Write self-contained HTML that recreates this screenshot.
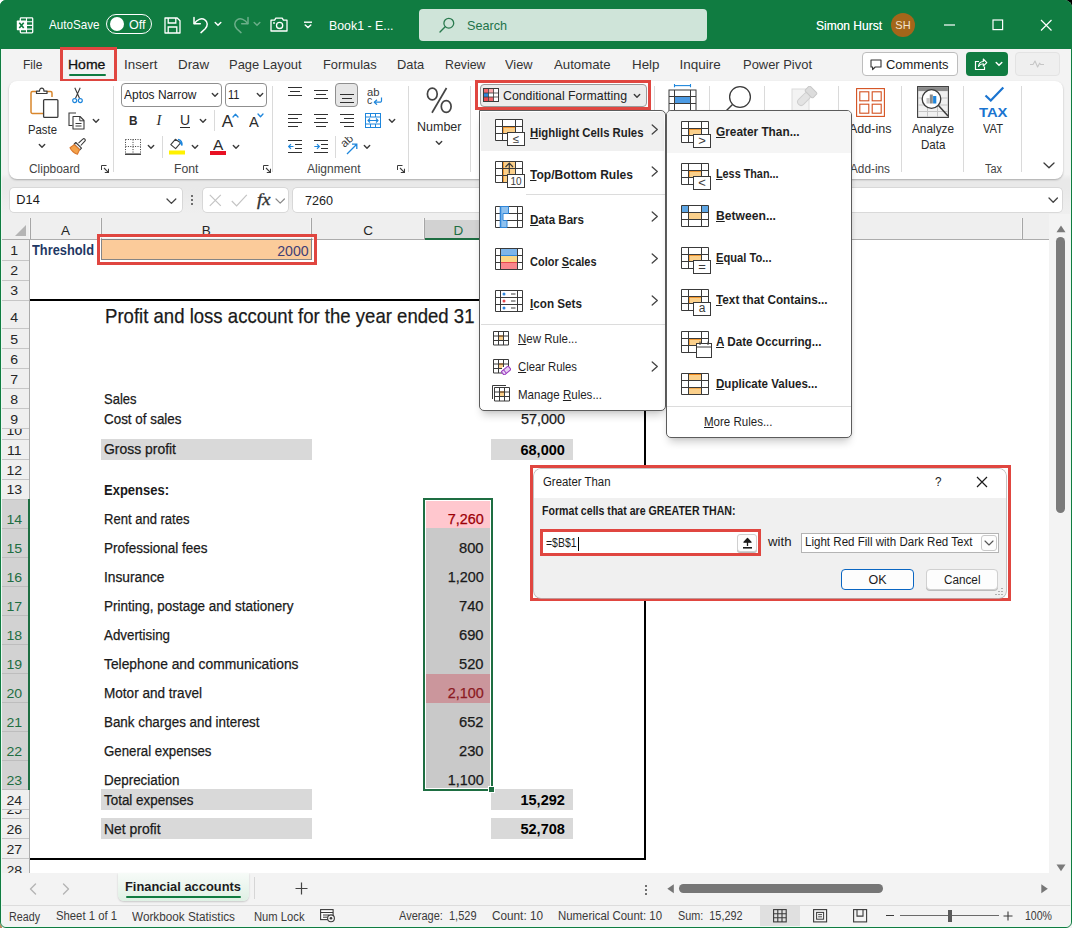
<!DOCTYPE html>
<html><head><meta charset="utf-8"><title>Excel</title>
<style>
html,body{margin:0;padding:0;}
body{width:1072px;height:928px;overflow:hidden;position:relative;background:#fff;
 font-family:"Liberation Sans",sans-serif;}
div,span.t,svg{position:absolute;box-sizing:border-box;}
span.t{white-space:nowrap;line-height:1;}
u{text-decoration-thickness:1px;text-underline-offset:1px;}
</style></head><body>
<div style="left:1060px;top:0px;width:12px;height:12px;background:#000;"></div>
<div style="left:0px;top:916px;width:12px;height:12px;background:#b88a5e;"></div>
<div style="left:1060px;top:916px;width:12px;height:12px;background:#9a9a9a;"></div>
<div style="left:0px;top:0px;width:1072px;height:928px;background:#f3f3f3;border-radius:6px 8px 6px 6px;overflow:hidden;"></div>
<div style="left:0px;top:0px;width:1072px;height:48.5px;background:#107c41;border-radius:6px 8px 0 0;"></div>
<svg style="left:16px;top:16.5px;" width="18" height="17" viewBox="0 0 18 17">
<rect x="4.300" y="0.900" width="12.400" height="15" rx="0.800" fill="none" stroke="#fff" stroke-width="1.300"/>
<path d="M4.300 4.700h12.400M4.300 8.400h12.400M4.300 12.100h12.400M10.500 0.900v15" stroke="#fff" stroke-width="1.100" fill="none"/>
<rect x="0.800" y="3.600" width="9.600" height="9.600" rx="0.600" fill="#fff"/>
<path d="M3.300 5.800l4.400 5.200M7.700 5.800l-4.400 5.200" stroke="#107c41" stroke-width="1.600" fill="none"/>
</svg>
<span id="t1" class="t" style="top:18.25px;font-size:13px;color:#fff;left:49px;transform-origin:0 0;transform:scaleX(0.8958);">AutoSave</span>
<div style="left:106px;top:14px;width:46px;height:20px;border:1.3px solid #fff;border-radius:10px;"></div>
<div style="left:109.5px;top:17px;width:14px;height:14px;background:#fff;border-radius:50%;"></div>
<span id="t2" class="t" style="top:18.25px;font-size:13px;color:#fff;left:128.5px;transform-origin:0 0;transform:scaleX(0.9644);">Off</span>
<svg style="left:164px;top:17px;" width="17" height="17" viewBox="0 0 17 17"><path d="M1 1h12.2l2.8 2.8V16H1z" fill="none" stroke="#fff" stroke-width="1.3" stroke-linejoin="round"/>
<path d="M4.2 1v5h7.6V1M4.2 16v-6h8.6v6" fill="none" stroke="#fff" stroke-width="1.3"/></svg>
<svg style="left:192px;top:15px;" width="18" height="19" viewBox="0 0 18 19"><path d="M2 2.5v6.3h6.3" fill="none" stroke="#fff" stroke-width="1.5" stroke-linecap="round" stroke-linejoin="round"/>
<path d="M2.4 8.4C5 4.6 9.3 2.6 12.6 4.6c3.6 2.3 3.2 6.3 0.6 9.1L9 17.6" fill="none" stroke="#fff" stroke-width="1.5" stroke-linecap="round"/></svg>
<svg style="left:214px;top:21px;" width="8" height="6" viewBox="0 0 8 6"><path d="M1.2 1.5l2.8 2.8 2.8-2.8" fill="none" stroke="#fff" stroke-width="1.5" stroke-linecap="round"/></svg>
<svg style="left:232px;top:15px;" width="18" height="19" viewBox="0 0 18 19"><g transform="translate(18,0) scale(-1,1)" opacity="0.38"><path d="M2 2.5v6.3h6.3" fill="none" stroke="#fff" stroke-width="1.5" stroke-linecap="round" stroke-linejoin="round"/>
<path d="M2.4 8.4C5 4.6 9.3 2.6 12.6 4.6c3.6 2.3 3.2 6.3 0.6 9.1L9 17.6" fill="none" stroke="#fff" stroke-width="1.5" stroke-linecap="round"/></g></svg>
<svg style="left:253px;top:21px;" width="8" height="6" viewBox="0 0 8 6"><path d="M1.2 1.5l2.8 2.8 2.8-2.8" fill="none" stroke="#fff" stroke-width="1.5" stroke-linecap="round" opacity="0.38"/></svg>
<svg style="left:270px;top:17px;" width="18" height="15" viewBox="0 0 18 15"><path d="M1 3.2h3.6l1.2-2h6.4l1.2 2H17V14H1z" fill="none" stroke="#fff" stroke-width="1.3" stroke-linejoin="round"/>
<circle cx="9.6" cy="8.4" r="3.1" fill="none" stroke="#fff" stroke-width="1.3"/><circle cx="4" cy="6" r="0.9" fill="#fff"/></svg>
<svg style="left:303px;top:21px;" width="10" height="8" viewBox="0 0 10 8"><path d="M1 1.2h8" stroke="#fff" stroke-width="1.4"/><path d="M2.2 4l2.8 2.6L7.8 4" fill="none" stroke="#fff" stroke-width="1.4" stroke-linecap="round"/></svg>
<span id="t3" class="t" style="top:19.25px;font-size:13px;color:#fff;left:328.5px;transform-origin:0 0;transform:scaleX(0.9496);">Book1  -  E...</span>
<div style="left:419px;top:9px;width:288px;height:32px;background:#cfe4d9;border-radius:4px;"></div>
<svg style="left:439px;top:17px;" width="16" height="16" viewBox="0 0 16 16"><circle cx="9.8" cy="6.2" r="4.9" fill="none" stroke="#2a7a4f" stroke-width="1.3"/><path d="M6.2 9.8L1 15" stroke="#2a7a4f" stroke-width="1.4" stroke-linecap="round"/></svg>
<span id="t4" class="t" style="top:19.25px;font-size:13px;color:#23734a;left:467px;transform-origin:0 0;transform:scaleX(0.9708);">Search</span>
<span id="t5" class="t" style="top:19.00px;font-size:13.5px;color:#fff;left:816px;transform-origin:0 0;transform:scaleX(0.8885);text-shadow:0 0 0.500px rgba(255,255,255,0.700);">Simon Hurst</span>
<div style="left:891px;top:13px;width:24px;height:24px;background:#a4661a;border-radius:50%;"></div>
<span id="t6" class="t" style="top:19.75px;font-size:11px;color:#f4e3cc;left:903px;transform-origin:50% 0;transform:translateX(-50%) ;">SH</span>
<svg style="left:944px;top:24px;" width="12" height="2" viewBox="0 0 12 2"><path d="M0 1h11" stroke="#fff" stroke-width="1.2"/></svg>
<svg style="left:992px;top:19px;" width="12" height="12" viewBox="0 0 12 12"><rect x="1" y="1" width="9.6" height="9.6" fill="none" stroke="#fff" stroke-width="1.2"/></svg>
<svg style="left:1040px;top:19px;" width="13" height="13" viewBox="0 0 13 13"><path d="M1 1l10.5 10.5M11.5 1L1 11.500" stroke="#fff" stroke-width="1.2"/></svg>
<span id="t7" class="t" style="top:58.00px;font-size:13.5px;color:#333;left:22.55px;transform-origin:0 0;transform:scaleX(0.8913);">File</span>
<span id="t8" class="t" style="top:58.00px;font-size:13.5px;color:#333;left:124.3px;transform-origin:0 0;transform:scaleX(0.9892);">Insert</span>
<span id="t9" class="t" style="top:58.00px;font-size:13.5px;color:#333;left:177.55px;transform-origin:0 0;transform:scaleX(0.9884);">Draw</span>
<span id="t10" class="t" style="top:58.00px;font-size:13.5px;color:#333;left:229.3px;transform-origin:0 0;transform:scaleX(0.9583);">Page Layout</span>
<span id="t11" class="t" style="top:58.00px;font-size:13.5px;color:#333;left:322.55px;transform-origin:0 0;transform:scaleX(0.9535);">Formulas</span>
<span id="t12" class="t" style="top:58.00px;font-size:13.5px;color:#333;left:396.8px;transform-origin:0 0;transform:scaleX(0.9516);">Data</span>
<span id="t13" class="t" style="top:58.00px;font-size:13.5px;color:#333;left:444.8px;transform-origin:0 0;transform:scaleX(0.9127);">Review</span>
<span id="t14" class="t" style="top:58.00px;font-size:13.5px;color:#333;left:504.8px;transform-origin:0 0;transform:scaleX(0.9473);">View</span>
<span id="t15" class="t" style="top:58.00px;font-size:13.5px;color:#333;left:553.6999999999999px;transform-origin:0 0;transform:scaleX(0.9793);">Automate</span>
<span id="t16" class="t" style="top:58.00px;font-size:13.5px;color:#333;left:631.8px;transform-origin:0 0;transform:scaleX(0.9904);">Help</span>
<span id="t17" class="t" style="top:58.00px;font-size:13.5px;color:#333;left:679.4px;transform-origin:0 0;">Inquire</span>
<span id="t18" class="t" style="top:58.00px;font-size:13.5px;color:#333;left:743.0999999999999px;transform-origin:0 0;transform:scaleX(0.9579);">Power Pivot</span>
<span id="t19" class="t" style="top:58.00px;font-size:13.5px;color:#111;left:68.2px;transform-origin:0 0;transform:scaleX(1.0384);-webkit-text-stroke:0.300px #111;">Home</span>
<div style="left:69.3px;top:73.5px;width:36.4px;height:2.6px;background:#107c41;border-radius:1.3px;"></div>
<div style="left:60px;top:47px;width:57px;height:34.5px;border:3px solid #e04640;"></div>
<div style="left:862px;top:52px;width:95.5px;height:24px;background:#fff;border:1px solid #bdbdbd;border-radius:4px;"></div>
<svg style="left:870px;top:59px;" width="12" height="12" viewBox="0 0 12 12"><path d="M1 1h10v7H5.2L2.6 10.600V8H1z" fill="none" stroke="#333" stroke-width="1.1" stroke-linejoin="round"/></svg>
<span id="t20" class="t" style="top:58.00px;font-size:13.5px;color:#222;left:886px;transform-origin:0 0;transform:scaleX(0.9576);">Comments</span>
<div style="left:966px;top:52px;width:41.5px;height:24px;background:#107c41;border-radius:4px;"></div>
<svg style="left:974px;top:57px;" width="14" height="14" viewBox="0 0 14 14"><path d="M5 4.500H1.500V12.500H10.500V9.500" fill="none" stroke="#fff" stroke-width="1.2"/><path d="M4.500 9.500C4.800 6.300 6.800 4.600 9.300 4.500V2L12.800 5.600L9.300 9V6.800C7.300 6.800 5.800 7.600 4.500 9.500z" fill="none" stroke="#fff" stroke-width="1.1" stroke-linejoin="round"/></svg>
<svg style="left:995px;top:61px;" width="8" height="6" viewBox="0 0 8 6"><path d="M1.2 1.5l2.800 2.800 2.800-2.800" fill="none" stroke="#fff" stroke-width="1.5" stroke-linecap="round"/></svg>
<div style="left:1015px;top:52px;width:45px;height:24px;background:#efefef;border:1px solid #e3e3e3;border-radius:4px;"></div>
<svg style="left:1029px;top:59px;" width="16" height="10" viewBox="0 0 16 10"><path d="M1 5.500h3l2-3.500 2.600 6 2-3.800 1 1.300h3.400" fill="none" stroke="#c6c6c6" stroke-width="1.1" stroke-linejoin="round"/></svg>
<div style="left:1.5px;top:174px;width:1069px;height:40px;background:linear-gradient(#f3f3f3 0,#e9e9e9 6px,#e9e9e9 14px,#efefef 40px);"></div>
<div style="left:8.5px;top:81px;width:1054.5px;height:98px;background:#fff;border-radius:8px;box-shadow:0 1px 2px rgba(0,0,0,0.280);"></div>
<svg style="left:30px;top:87px;" width="29" height="32" viewBox="0 0 29 32">
<path d="M6 4.500H2.500a1.500 1.500 0 0 0-1.500 1.500v19a1.500 1.500 0 0 0 1.500 1.500H13" fill="none" stroke="#d9862c" stroke-width="1.500"/>
<path d="M17 4.500h3.500a1.500 1.500 0 0 1 1.500 1.500V10" fill="none" stroke="#d9862c" stroke-width="1.500"/>
<path d="M6.500 6.500V4.200h3c0-4 4.500-4 4.500 0h3v2.300z" fill="#fff" stroke="#3b3b3b" stroke-width="1.200" stroke-linejoin="round"/>
<rect x="13.600" y="12.600" width="14.300" height="17.800" rx="1" fill="#fff" stroke="#3b3b3b" stroke-width="1.300"/></svg>
<span id="t21" class="t" style="top:123.00px;font-size:13.5px;color:#2b2b2b;left:27.6px;transform-origin:0 0;transform:scaleX(0.8398);">Paste</span>
<svg style="left:38px;top:142.5px;" width="8" height="6" viewBox="0 0 8 6"><path d="M1.300 1.600l2.700 2.700 2.700-2.700" fill="none" stroke="#3b3b3b" stroke-width="1.4" stroke-linecap="round" stroke-linejoin="round"/></svg>
<svg style="left:72px;top:87px;" width="11" height="17" viewBox="0 0 11 17"><path d="M2.800 0.800L7.600 11.500M8.200 0.800L3.400 11.500" stroke="#3b3b3b" stroke-width="1.100" fill="none"/>
<circle cx="2.700" cy="13.600" r="2" fill="none" stroke="#1e86dc" stroke-width="1.200"/><circle cx="8.300" cy="13.600" r="2" fill="none" stroke="#1e86dc" stroke-width="1.200"/></svg>
<svg style="left:68px;top:112px;" width="18" height="18" viewBox="0 0 18 18"><path d="M4.500 13.500H1V1h7l0 0" fill="none" stroke="#3b3b3b" stroke-width="1.100"/>
<path d="M5 4.500h7l4 4V17H5z" fill="#fff" stroke="#3b3b3b" stroke-width="1.100" stroke-linejoin="round"/><path d="M11.800 4.700V8.800H16" fill="none" stroke="#3b3b3b" stroke-width="1"/>
<path d="M7.500 11.500h6M7.500 14h6" stroke="#3b3b3b" stroke-width="1"/></svg>
<svg style="left:91.5px;top:118px;" width="8" height="6" viewBox="0 0 8 6"><path d="M1.300 1.600l2.700 2.700 2.700-2.700" fill="none" stroke="#3b3b3b" stroke-width="1.4" stroke-linecap="round" stroke-linejoin="round"/></svg>
<svg style="left:69px;top:138px;" width="17" height="17" viewBox="0 0 17 17"><path d="M9.500 5.200L13.800 1.200a1.400 1.400 0 0 1 2 2L11.800 7.500" fill="#fff" stroke="#3b3b3b" stroke-width="1.100"/>
<path d="M6.800 4.500l5.700 5.700-1.700 1.700-5.700-5.700z" fill="#fff" stroke="#3b3b3b" stroke-width="1.100" stroke-linejoin="round"/>
<path d="M5.300 6.600L1 9.800c1.500 3 4 5.300 7.400 6.400l2.200-4.600z" fill="#f4a24a" stroke="#d9762c" stroke-width="1.100" stroke-linejoin="round"/></svg>
<span id="t22" class="t" style="top:163.00px;font-size:12.5px;color:#444;left:28.5px;transform-origin:0 0;transform:scaleX(0.9530);">Clipboard</span>
<svg style="left:100.5px;top:165px;" width="8" height="8" viewBox="0 0 8 8"><path d="M0.500 5V0.500H5.500" fill="none" stroke="#3b3b3b" stroke-width="1"/><path d="M3 3L7.300 7.300M7.500 3.800V7.500H3.800" fill="none" stroke="#3b3b3b" stroke-width="1.100"/></svg>
<div style="left:112.5px;top:86px;width:1px;height:86px;background:#dadada;"></div>
<div style="left:121px;top:83px;width:100.5px;height:23.5px;border:1px solid #8f8f8f;border-radius:4px;background:#fff;"></div>
<span id="t23" class="t" style="top:88.00px;font-size:13.5px;color:#222;left:124.3px;transform-origin:0 0;transform:scaleX(0.8865);">Aptos Narrow</span>
<svg style="left:211px;top:92px;" width="8" height="6" viewBox="0 0 8 6"><path d="M1.300 1.600l2.700 2.700 2.700-2.700" fill="none" stroke="#3b3b3b" stroke-width="1.4" stroke-linecap="round" stroke-linejoin="round"/></svg>
<div style="left:224.5px;top:83px;width:42px;height:23.5px;border:1px solid #8f8f8f;border-radius:4px;background:#fff;"></div>
<span id="t24" class="t" style="top:88.00px;font-size:13.5px;color:#222;left:227.5px;transform-origin:0 0;transform:scaleX(0.8205);">11</span>
<svg style="left:256px;top:92px;" width="8" height="6" viewBox="0 0 8 6"><path d="M1.300 1.600l2.700 2.700 2.700-2.700" fill="none" stroke="#3b3b3b" stroke-width="1.4" stroke-linecap="round" stroke-linejoin="round"/></svg>
<span id="t25" class="t" style="top:114.00px;font-size:13.5px;color:#2b2b2b;font-weight:bold;left:129.3px;transform-origin:0 0;transform:scaleX(0.8718);">B</span>
<span id="t26" class="t" style="top:113.00px;font-size:14.5px;color:#2b2b2b;font-family:'Liberation Serif',serif;font-style:italic;left:156.5px;transform-origin:0 0;">I</span>
<span id="t27" class="t" style="top:113.25px;font-size:14px;color:#2b2b2b;left:180px;transform-origin:0 0;">U</span>
<div style="left:180px;top:127px;width:9.5px;height:1.2px;background:#2b2b2b;"></div>
<svg style="left:199px;top:118px;" width="8" height="6" viewBox="0 0 8 6"><path d="M1.300 1.600l2.700 2.700 2.700-2.700" fill="none" stroke="#3b3b3b" stroke-width="1.4" stroke-linecap="round" stroke-linejoin="round"/></svg>
<div style="left:214.1px;top:110px;width:1px;height:21px;background:#dadada;"></div>
<span id="t28" class="t" style="top:113.25px;font-size:17px;color:#2b2b2b;left:221.8px;transform-origin:0 0;">A</span>
<svg style="left:231.5px;top:113px;" width="7" height="5" viewBox="0 0 7 5"><path d="M1 4l2.500-2.800L6 4" fill="none" stroke="#1e86dc" stroke-width="1.300" stroke-linecap="round" stroke-linejoin="round"/></svg>
<span id="t29" class="t" style="top:115.00px;font-size:14.5px;color:#2b2b2b;left:249px;transform-origin:0 0;transform:scaleX(1.0132);">A</span>
<svg style="left:257px;top:113px;" width="7" height="5" viewBox="0 0 7 5"><path d="M1 1l2.500 2.800L6 1" fill="none" stroke="#1e86dc" stroke-width="1.300" stroke-linecap="round" stroke-linejoin="round"/></svg>
<svg style="left:125px;top:139px;" width="16" height="16" viewBox="0 0 16 16"><path d="M0.500 0.500h15M0.500 0.500v14M15.500 0.500v14M8 0.500v14M0.500 7.500h15" stroke="#3b3b3b" stroke-width="1" stroke-dasharray="1 1.400" fill="none"/><path d="M0 15.200h16" stroke="#3b3b3b" stroke-width="1.500"/></svg>
<svg style="left:147px;top:144px;" width="8" height="6" viewBox="0 0 8 6"><path d="M1.300 1.600l2.700 2.700 2.700-2.700" fill="none" stroke="#3b3b3b" stroke-width="1.4" stroke-linecap="round" stroke-linejoin="round"/></svg>
<div style="left:161.5px;top:136px;width:1px;height:22px;background:#dadada;"></div>
<svg style="left:168.5px;top:137px;" width="16" height="18" viewBox="0 0 16 18"><path d="M6.300 2.300L1.800 7.600l4.800 4 5-5.800z" fill="#fff" stroke="#3b3b3b" stroke-width="1.100" stroke-linejoin="round"/>
<path d="M9 2.500C11.500 3 13.300 5 13 8.500c-0.500-1.800-1.200-2.500-2.200-3" fill="none" stroke="#1e86dc" stroke-width="1.400"/>
<rect x="-0.500" y="13.500" width="17.500" height="4" fill="#fff100"/></svg>
<svg style="left:191px;top:144px;" width="8" height="6" viewBox="0 0 8 6"><path d="M1.300 1.600l2.700 2.700 2.700-2.700" fill="none" stroke="#3b3b3b" stroke-width="1.4" stroke-linecap="round" stroke-linejoin="round"/></svg>
<span id="t30" class="t" style="top:137.25px;font-size:15px;color:#2b2b2b;left:213.2px;transform-origin:0 0;transform:scaleX(1.0284);">A</span>
<div style="left:210px;top:150.5px;width:16px;height:4px;background:#e81123;"></div>
<svg style="left:232px;top:144px;" width="8" height="6" viewBox="0 0 8 6"><path d="M1.300 1.600l2.700 2.700 2.700-2.700" fill="none" stroke="#3b3b3b" stroke-width="1.4" stroke-linecap="round" stroke-linejoin="round"/></svg>
<span id="t31" class="t" style="top:163.00px;font-size:12.5px;color:#444;left:174px;transform-origin:0 0;transform:scaleX(0.9794);">Font</span>
<svg style="left:262.5px;top:165px;" width="8" height="8" viewBox="0 0 8 8"><path d="M0.500 5V0.500H5.500" fill="none" stroke="#3b3b3b" stroke-width="1"/><path d="M3 3L7.300 7.300M7.500 3.800V7.500H3.800" fill="none" stroke="#3b3b3b" stroke-width="1.100"/></svg>
<div style="left:272.1px;top:86px;width:1px;height:86px;background:#dadada;"></div>
<div style="left:288.0px;top:87px;width:14px;height:1.15px;background:#303030;"></div>
<div style="left:290.0px;top:91px;width:10px;height:1.15px;background:#303030;"></div>
<div style="left:288.0px;top:95px;width:14px;height:1.15px;background:#303030;"></div>
<div style="left:314.0px;top:90px;width:14px;height:1.15px;background:#303030;"></div>
<div style="left:316.0px;top:94px;width:10px;height:1.15px;background:#303030;"></div>
<div style="left:314.0px;top:98px;width:14px;height:1.15px;background:#303030;"></div>
<div style="left:335px;top:83px;width:23px;height:23.5px;background:#e6e6e6;border:1px solid #8f8f8f;border-radius:4px;"></div>
<div style="left:339.5px;top:94px;width:14px;height:1.15px;background:#303030;"></div>
<div style="left:341.5px;top:98px;width:10px;height:1.15px;background:#303030;"></div>
<div style="left:339.5px;top:102px;width:14px;height:1.15px;background:#303030;"></div>
<span id="t32" class="t" style="top:87.00px;font-size:10.5px;color:#3b3b3b;left:367px;transform-origin:0 0;transform:scaleX(1.0695);">ab</span>
<span id="t33" class="t" style="top:95.00px;font-size:10.5px;color:#3b3b3b;left:367px;transform-origin:0 0;">c</span>
<svg style="left:372.5px;top:97px;" width="10" height="8" viewBox="0 0 10 8"><path d="M8.500 0.500v3.200a1.500 1.500 0 0 1-1.500 1.500H1.500" fill="none" stroke="#1e86dc" stroke-width="1.200"/><path d="M4 2.700L1.300 5.200 4 7.700" fill="none" stroke="#1e86dc" stroke-width="1.200" stroke-linejoin="round"/></svg>
<div style="left:288px;top:114px;width:14px;height:1.15px;background:#303030;"></div>
<div style="left:288px;top:118px;width:10px;height:1.15px;background:#303030;"></div>
<div style="left:288px;top:122px;width:14px;height:1.15px;background:#303030;"></div>
<div style="left:288px;top:126px;width:10px;height:1.15px;background:#303030;"></div>
<div style="left:314.0px;top:114px;width:14px;height:1.15px;background:#303030;"></div>
<div style="left:316.0px;top:118px;width:10px;height:1.15px;background:#303030;"></div>
<div style="left:314.0px;top:122px;width:14px;height:1.15px;background:#303030;"></div>
<div style="left:316.0px;top:126px;width:10px;height:1.15px;background:#303030;"></div>
<div style="left:340px;top:114px;width:14px;height:1.15px;background:#303030;"></div>
<div style="left:344px;top:118px;width:10px;height:1.15px;background:#303030;"></div>
<div style="left:340px;top:122px;width:14px;height:1.15px;background:#303030;"></div>
<div style="left:344px;top:126px;width:10px;height:1.15px;background:#303030;"></div>
<svg style="left:365px;top:113px;" width="16" height="15" viewBox="0 0 16 15"><rect x="0.500" y="0.500" width="15" height="14" fill="#fff" stroke="#1e86dc" stroke-width="1"/><path d="M5.500 0.500v3.500M10.500 0.500v3.500M5.500 11v3.500M10.500 11v3.500M0.500 4h15M0.500 11h15" stroke="#1e86dc" stroke-width="1" fill="none"/>
<path d="M3 7.500h10M5 5.500L3 7.500 5 9.500M11 5.500l2 2-2 2" fill="none" stroke="#1e86dc" stroke-width="1.100"/></svg>
<svg style="left:387.5px;top:118px;" width="8" height="6" viewBox="0 0 8 6"><path d="M1.300 1.600l2.700 2.700 2.700-2.700" fill="none" stroke="#3b3b3b" stroke-width="1.4" stroke-linecap="round" stroke-linejoin="round"/></svg>
<svg style="left:288px;top:140px;" width="15" height="14" viewBox="0 0 15 14"><path d="M0 0.500h14M7 4.500h7M7 8.500h7M0 12.500h14" stroke="#303030" stroke-width="1.100"/><path d="M5.500 6.500H0.800M3 4.200L0.700 6.500 3 8.800" fill="none" stroke="#1e86dc" stroke-width="1.200"/></svg>
<svg style="left:314px;top:140px;" width="15" height="14" viewBox="0 0 15 14"><path d="M0 0.500h14M7 4.500h7M7 8.500h7M0 12.500h14" stroke="#303030" stroke-width="1.100"/><path d="M0.300 6.500H5.200M3 4.200L5.300 6.500 3 8.800" fill="none" stroke="#1e86dc" stroke-width="1.200"/></svg>
<div style="left:334.5px;top:136px;width:1px;height:22px;background:#dadada;"></div>
<svg style="left:341px;top:137px;" width="18" height="18" viewBox="0 0 18 18"><text x="0" y="0" font-family="Liberation Sans" font-size="11.500" fill="#3b3b3b" transform="translate(3.500,11) rotate(-42)">ab</text>
<path d="M6 17L15.500 7.500M11 7.200H15.800V12" fill="none" stroke="#1e86dc" stroke-width="1.300"/></svg>
<svg style="left:362.5px;top:144px;" width="8" height="6" viewBox="0 0 8 6"><path d="M1.300 1.600l2.700 2.700 2.700-2.700" fill="none" stroke="#3b3b3b" stroke-width="1.4" stroke-linecap="round" stroke-linejoin="round"/></svg>
<span id="t34" class="t" style="top:163.00px;font-size:12.5px;color:#444;left:306.5px;transform-origin:0 0;transform:scaleX(0.9623);">Alignment</span>
<svg style="left:397px;top:165px;" width="8" height="8" viewBox="0 0 8 8"><path d="M0.500 5V0.500H5.500" fill="none" stroke="#3b3b3b" stroke-width="1"/><path d="M3 3L7.300 7.300M7.500 3.800V7.500H3.800" fill="none" stroke="#3b3b3b" stroke-width="1.100"/></svg>
<div style="left:407.9px;top:86px;width:1px;height:86px;background:#dadada;"></div>
<svg style="left:426px;top:87px;" width="27" height="27" viewBox="0 0 27 27"><ellipse cx="6.300" cy="7" rx="4.900" ry="5.900" fill="none" stroke="#444" stroke-width="1.700"/><ellipse cx="20.200" cy="19.500" rx="4.900" ry="5.900" fill="none" stroke="#444" stroke-width="1.700"/><path d="M20.500 1L6 25.800" stroke="#444" stroke-width="1.700"/></svg>
<span id="t35" class="t" style="top:120.00px;font-size:13.5px;color:#2b2b2b;left:417px;transform-origin:0 0;transform:scaleX(0.9268);">Number</span>
<svg style="left:435px;top:139.5px;" width="8" height="6" viewBox="0 0 8 6"><path d="M1.300 1.600l2.700 2.700 2.700-2.700" fill="none" stroke="#3b3b3b" stroke-width="1.4" stroke-linecap="round" stroke-linejoin="round"/></svg>
<div style="left:470.0px;top:86px;width:1px;height:86px;background:#dadada;"></div>
<div style="left:479.5px;top:83.5px;width:167.5px;height:23px;background:#ececec;border:1px solid #9a9a9a;border-radius:4px;"></div>
<svg style="left:483px;top:88px;" width="16" height="14" viewBox="0 0 16 14"><rect x="0.500" y="0.500" width="15" height="13" fill="#fff" stroke="#3b3b3b" stroke-width="1"/>
<rect x="1" y="1" width="4.500" height="4" fill="#f0686d"/><rect x="5.500" y="1" width="5" height="4" fill="#f9a9ac"/><rect x="1" y="5" width="4.500" height="4" fill="#2f86d9"/><rect x="1" y="9" width="4.500" height="4" fill="#e8474c"/><rect x="5.500" y="9" width="5" height="4" fill="#f0686d"/>
<path d="M5.500 0.500v13M10.500 0.500v13M0.500 5h15M0.500 9h15" stroke="#3b3b3b" stroke-width="0.800" fill="none"/></svg>
<span id="t36" class="t" style="top:89.00px;font-size:13.5px;color:#222;left:503.2px;transform-origin:0 0;transform:scaleX(0.9129);">Conditional Formatting</span>
<svg style="left:632.5px;top:92.5px;" width="8" height="6" viewBox="0 0 8 6"><path d="M1.300 1.600l2.700 2.700 2.700-2.700" fill="none" stroke="#3b3b3b" stroke-width="1.4" stroke-linecap="round" stroke-linejoin="round"/></svg>
<div style="left:475.2px;top:80px;width:175.5px;height:30.2px;border:3.200px solid #e04640;"></div>
<div style="left:654.2px;top:86px;width:1px;height:86px;background:#dadada;"></div>
<svg style="left:668px;top:84px;" width="29" height="30" viewBox="0 0 29 30"><path d="M6.500 1.600h16" stroke="#1e86dc" stroke-width="1.100"/><path d="M6.500 0v3.200M22.500 0v3.200" stroke="#1e86dc" stroke-width="1.100"/>
<rect x="1" y="6" width="27" height="22" fill="#fff" stroke="#3b3b3b" stroke-width="1"/><path d="M6.500 6v22M22.500 6v22M1 12.500h27M1 19.500h27" stroke="#3b3b3b" stroke-width="1" fill="none"/><rect x="7" y="13" width="15" height="6" fill="#4c9be4"/></svg>
<div style="left:709.2px;top:86px;width:1px;height:86px;background:#dadada;"></div>
<svg style="left:722px;top:85px;" width="32" height="32" viewBox="0 0 32 32"><circle cx="18" cy="12" r="10.400" fill="#fff" stroke="#3b3b3b" stroke-width="1.300"/><path d="M10.500 19.500L2 28" stroke="#3b3b3b" stroke-width="1.500"/></svg>
<div style="left:764.0px;top:86px;width:1px;height:86px;background:#dadada;"></div>
<svg style="left:790px;top:86px;" width="30" height="28" viewBox="0 0 30 28"><rect x="2" y="3" width="17" height="24" fill="#f3f3f3" stroke="#dcdcdc" stroke-width="1"/>
<g transform="rotate(-45 15 12)"><rect x="6" y="8.500" width="15" height="7" rx="3.500" fill="#e3e3e3" stroke="#cfcfcf"/><rect x="20" y="6.500" width="7" height="11" rx="1.500" fill="#dcdcdc" stroke="#c8c8c8"/></g></svg>
<div style="left:837.5px;top:86px;width:1px;height:86px;background:#dadada;"></div>
<svg style="left:856px;top:87.5px;" width="29" height="29" viewBox="0 0 29 29"><rect x="0.600" y="0.600" width="27.800" height="27.800" fill="#fff" stroke="#d4501f" stroke-width="1.100"/>
<rect x="3.800" y="3.800" width="9" height="9" fill="none" stroke="#d4501f" stroke-width="1.100"/><rect x="16.200" y="3.800" width="9" height="9" fill="none" stroke="#d4501f" stroke-width="1.100"/>
<rect x="3.800" y="16.200" width="9" height="9" fill="none" stroke="#d4501f" stroke-width="1.100"/><rect x="16.200" y="16.200" width="9" height="9" fill="none" stroke="#d4501f" stroke-width="1.100"/></svg>
<span id="t37" class="t" style="top:122.00px;font-size:13.5px;color:#2b2b2b;left:849px;transform-origin:0 0;transform:scaleX(0.9283);">Add-ins</span>
<span id="t38" class="t" style="top:163.00px;font-size:12.5px;color:#444;left:850px;transform-origin:0 0;transform:scaleX(0.9436);">Add-ins</span>
<div style="left:901.2px;top:86px;width:1px;height:86px;background:#dadada;"></div>
<svg style="left:917px;top:86px;" width="32" height="32" viewBox="0 0 32 32"><rect x="0.600" y="0.600" width="30.800" height="30.800" fill="#f0f0f0" stroke="#3b3b3b" stroke-width="1.100"/><rect x="1.100" y="1.100" width="29.800" height="4" fill="#8a8a8a"/>
<path d="M1 12h30M1 19h30M1 25.500h30M10.500 5v26M20.500 5v26" stroke="#c4c4c4" stroke-width="1" fill="none"/>
<circle cx="14.500" cy="13" r="9.300" fill="#fff" stroke="#3b3b3b" stroke-width="1.300"/><path d="M21.500 19.500L31 30" stroke="#3b3b3b" stroke-width="1.500"/>
<rect x="9.500" y="12" width="3" height="5.500" fill="#c8c8c8"/><rect x="12.800" y="8.500" width="3" height="9" fill="#8a8a8a"/><rect x="16.100" y="10" width="3.200" height="7.500" fill="#1e86dc"/></svg>
<span id="t39" class="t" style="top:122.00px;font-size:13.5px;color:#2b2b2b;left:912px;transform-origin:0 0;transform:scaleX(0.8744);">Analyze</span>
<span id="t40" class="t" style="top:138.00px;font-size:13.5px;color:#2b2b2b;left:921px;transform-origin:0 0;transform:scaleX(0.8587);">Data</span>
<div style="left:963.3px;top:86px;width:1px;height:86px;background:#dadada;"></div>
<svg style="left:984px;top:86px;" width="21" height="16" viewBox="0 0 21 16"><path d="M1.500 9.500l5.300 5 12.500-13" fill="none" stroke="#1a74d0" stroke-width="2.200"/></svg>
<span id="t41" class="t" style="top:107.15px;font-size:12.2px;color:#1a74d0;font-weight:bold;left:979.3px;transform-origin:0 0;transform:scaleX(1.2136);">TAX</span>
<span id="t42" class="t" style="top:122.00px;font-size:13.5px;color:#2b2b2b;left:982.5px;transform-origin:0 0;transform:scaleX(0.8242);">VAT</span>
<span id="t43" class="t" style="top:163.00px;font-size:12.5px;color:#444;left:984.8px;transform-origin:0 0;transform:scaleX(0.8739);">Tax</span>
<div style="left:1020.9px;top:86px;width:1px;height:86px;background:#dadada;"></div>
<svg style="left:1043px;top:162px;" width="12" height="7" viewBox="0 0 12 7"><path d="M1 1l5 4.800L11 1" fill="none" stroke="#3b3b3b" stroke-width="1.300" stroke-linecap="round" stroke-linejoin="round"/></svg>
<div style="left:10px;top:187.5px;width:171.5px;height:24.6px;background:#fff;border-radius:4px;box-shadow:0 0 0 0.800px #d2d2d2;"></div>
<span id="t44" class="t" style="top:194.35px;font-size:12.8px;color:#1a1a1a;left:16.3px;transform-origin:0 0;">D14</span>
<svg style="left:166px;top:198px;" width="11" height="7" viewBox="0 0 11 7"><path d="M1 1l4.400 4.400L9.800 1" fill="none" stroke="#444" stroke-width="1.300" stroke-linecap="round" stroke-linejoin="round"/></svg>
<div style="left:190.8px;top:195.3px;width:2px;height:2px;background:#444;border-radius:50%;"></div>
<div style="left:190.8px;top:199.3px;width:2px;height:2px;background:#444;border-radius:50%;"></div>
<div style="left:190.8px;top:203.3px;width:2px;height:2px;background:#444;border-radius:50%;"></div>
<div style="left:203px;top:187.5px;width:84.5px;height:24.6px;background:#fff;border-radius:4px;box-shadow:0 0 0 0.800px #d2d2d2;"></div>
<svg style="left:209px;top:194px;" width="13" height="13" viewBox="0 0 13 13"><path d="M0.800 0.800l11 11M11.800 0.800l-11 11" stroke="#c4c4c4" stroke-width="1.200" fill="none"/></svg>
<svg style="left:231px;top:194px;" width="17" height="13" viewBox="0 0 17 13"><path d="M0.800 7l4.800 4.800L15.800 0.800" stroke="#c4c4c4" stroke-width="1.200" fill="none"/></svg>
<span id="t45" class="t" style="top:191.25px;font-size:17px;color:#333;font-family:'Liberation Serif',serif;font-style:italic;left:257px;transform-origin:0 0;transform:scaleX(1.0992);-webkit-text-stroke:0.350px #333;">fx</span>
<svg style="left:275px;top:197.5px;" width="11" height="7" viewBox="0 0 11 7"><path d="M1 1l4.200 4.200L9.400 1" fill="none" stroke="#8a8a8a" stroke-width="1.200" stroke-linecap="round" stroke-linejoin="round"/></svg>
<div style="left:292.5px;top:187.5px;width:769.5px;height:24.6px;background:#fff;border-radius:4px;box-shadow:0 0 0 0.800px #d2d2d2;"></div>
<span id="t46" class="t" style="top:194.00px;font-size:13.5px;color:#222;left:304.5px;transform-origin:0 0;transform:scaleX(0.9319);">7260</span>
<svg style="left:1048px;top:197px;" width="11" height="7" viewBox="0 0 11 7"><path d="M1 1l4.200 4.200L9.400 1" fill="none" stroke="#444" stroke-width="1.300" stroke-linecap="round" stroke-linejoin="round"/></svg>
<div style="left:1.5px;top:214px;width:1047.5px;height:26px;background:#efefef;"></div>
<div style="left:1.5px;top:240px;width:28.5px;height:633px;background:#efefef;"></div>
<div style="left:30px;top:240px;width:1019px;height:633px;background:#fff;"></div>
<svg style="left:14px;top:224px;" width="13" height="13" viewBox="0 0 13 13"><path d="M12 1V12H1z" fill="#b4b4b4"/></svg>
<span id="t47" class="t" style="top:224.00px;font-size:13.5px;color:#262626;left:65.5px;transform-origin:50% 0;transform:translateX(-50%) ;">A</span>
<span id="t48" class="t" style="top:224.00px;font-size:13.5px;color:#262626;left:206.25px;transform-origin:50% 0;transform:translateX(-50%) ;">B</span>
<span id="t49" class="t" style="top:224.00px;font-size:13.5px;color:#262626;left:368.0px;transform-origin:50% 0;transform:translateX(-50%) ;">C</span>
<div style="left:424.5px;top:220px;width:67.5px;height:20px;background:#d2d2d2;border-bottom:2px solid #1e6e42;"></div>
<span id="t50" class="t" style="top:224.00px;font-size:13.5px;color:#1e6e42;left:458.25px;transform-origin:50% 0;transform:translateX(-50%) ;">D</span>
<div style="left:29.5px;top:218px;width:1px;height:22px;background:#a6a6a6;"></div>
<div style="left:28.5px;top:218px;width:1px;height:21px;background:#f6f6f6;"></div>
<div style="left:100.5px;top:218px;width:1px;height:22px;background:#a6a6a6;"></div>
<div style="left:99.5px;top:218px;width:1px;height:21px;background:#f6f6f6;"></div>
<div style="left:311.0px;top:218px;width:1px;height:22px;background:#a6a6a6;"></div>
<div style="left:310.0px;top:218px;width:1px;height:21px;background:#f6f6f6;"></div>
<div style="left:424.0px;top:218px;width:1px;height:22px;background:#a6a6a6;"></div>
<div style="left:423.0px;top:218px;width:1px;height:21px;background:#f6f6f6;"></div>
<div style="left:1022.0px;top:218px;width:1px;height:22px;background:#a6a6a6;"></div>
<div style="left:1021.0px;top:218px;width:1px;height:21px;background:#f6f6f6;"></div>
<div style="left:1.5px;top:239px;width:1047.5px;height:1px;background:#acacac;"></div>
<div style="left:424.5px;top:238px;width:67.5px;height:2px;background:#1e6e42;"></div>
<div style="left:1.5px;top:499px;width:28.5px;height:290.5px;background:#d2d2d2;"></div>
<div style="left:0.2px;top:240px;width:28.5px;height:20px;overflow:hidden;"><span class="t" style="left:0;width:28.500px;text-align:center;top:4.15px;font-size:13.2px;transform:scaleX(1.07);color:#262626;">1</span></div>
<div style="left:1.5px;top:259.5px;width:28.5px;height:1px;background:#c6c6c6;"></div>
<div style="left:0.2px;top:260px;width:28.5px;height:20px;overflow:hidden;"><span class="t" style="left:0;width:28.500px;text-align:center;top:4.15px;font-size:13.2px;transform:scaleX(1.07);color:#262626;">2</span></div>
<div style="left:1.5px;top:279.5px;width:28.5px;height:1px;background:#c6c6c6;"></div>
<div style="left:0.2px;top:280px;width:28.5px;height:20px;overflow:hidden;"><span class="t" style="left:0;width:28.500px;text-align:center;top:4.15px;font-size:13.2px;transform:scaleX(1.07);color:#262626;">3</span></div>
<div style="left:1.5px;top:299.5px;width:28.5px;height:1px;background:#c6c6c6;"></div>
<div style="left:0.2px;top:300px;width:28.5px;height:28.5px;overflow:hidden;"><span class="t" style="left:0;width:28.500px;text-align:center;top:11.15px;font-size:13.2px;transform:scaleX(1.07);color:#262626;">4</span></div>
<div style="left:1.5px;top:328.0px;width:28.5px;height:1px;background:#c6c6c6;"></div>
<div style="left:0.2px;top:328.5px;width:28.5px;height:20.0px;overflow:hidden;"><span class="t" style="left:0;width:28.500px;text-align:center;top:4.65px;font-size:13.2px;transform:scaleX(1.07);color:#262626;">5</span></div>
<div style="left:1.5px;top:348.0px;width:28.5px;height:1px;background:#c6c6c6;"></div>
<div style="left:0.2px;top:348.5px;width:28.5px;height:20.0px;overflow:hidden;"><span class="t" style="left:0;width:28.500px;text-align:center;top:4.65px;font-size:13.2px;transform:scaleX(1.07);color:#262626;">6</span></div>
<div style="left:1.5px;top:368.0px;width:28.5px;height:1px;background:#c6c6c6;"></div>
<div style="left:0.2px;top:368.5px;width:28.5px;height:20.0px;overflow:hidden;"><span class="t" style="left:0;width:28.500px;text-align:center;top:4.65px;font-size:13.2px;transform:scaleX(1.07);color:#262626;">7</span></div>
<div style="left:1.5px;top:388.0px;width:28.5px;height:1px;background:#c6c6c6;"></div>
<div style="left:0.2px;top:388.5px;width:28.5px;height:20.0px;overflow:hidden;"><span class="t" style="left:0;width:28.500px;text-align:center;top:4.65px;font-size:13.2px;transform:scaleX(1.07);color:#262626;">8</span></div>
<div style="left:1.5px;top:408.0px;width:28.5px;height:1px;background:#c6c6c6;"></div>
<div style="left:0.2px;top:408.5px;width:28.5px;height:20.0px;overflow:hidden;"><span class="t" style="left:0;width:28.500px;text-align:center;top:4.65px;font-size:13.2px;transform:scaleX(1.07);color:#262626;">9</span></div>
<div style="left:1.5px;top:428.0px;width:28.5px;height:1px;background:#c6c6c6;"></div>
<div style="left:0.2px;top:428.5px;width:28.5px;height:11.0px;overflow:hidden;"><span class="t" style="left:0;width:28.500px;text-align:center;top:-4.35px;font-size:13.2px;transform:scaleX(1.07);color:#262626;">10</span></div>
<div style="left:1.5px;top:439.0px;width:28.5px;height:1px;background:#c6c6c6;"></div>
<div style="left:0.2px;top:439.5px;width:28.5px;height:20.0px;overflow:hidden;"><span class="t" style="left:0;width:28.500px;text-align:center;top:4.65px;font-size:13.2px;transform:scaleX(1.07);color:#262626;">11</span></div>
<div style="left:1.5px;top:459.0px;width:28.5px;height:1px;background:#c6c6c6;"></div>
<div style="left:0.2px;top:459.5px;width:28.5px;height:20.0px;overflow:hidden;"><span class="t" style="left:0;width:28.500px;text-align:center;top:4.65px;font-size:13.2px;transform:scaleX(1.07);color:#262626;">12</span></div>
<div style="left:1.5px;top:479.0px;width:28.5px;height:1px;background:#c6c6c6;"></div>
<div style="left:0.2px;top:479.5px;width:28.5px;height:19.5px;overflow:hidden;"><span class="t" style="left:0;width:28.500px;text-align:center;top:3.65px;font-size:13.2px;transform:scaleX(1.07);color:#262626;">13</span></div>
<div style="left:1.5px;top:498.5px;width:28.5px;height:1px;background:#c6c6c6;"></div>
<div style="left:0.2px;top:499px;width:28.5px;height:29.5px;overflow:hidden;"><span class="t" style="left:0;width:28.500px;text-align:center;top:14.15px;font-size:13.2px;transform:scaleX(1.07);color:#1e6e42;">14</span></div>
<div style="left:1.5px;top:528.0px;width:28.5px;height:1px;background:#bdbdbd;"></div>
<div style="left:0.2px;top:528.5px;width:28.5px;height:29.0px;overflow:hidden;"><span class="t" style="left:0;width:28.500px;text-align:center;top:13.65px;font-size:13.2px;transform:scaleX(1.07);color:#1e6e42;">15</span></div>
<div style="left:1.5px;top:557.0px;width:28.5px;height:1px;background:#bdbdbd;"></div>
<div style="left:0.2px;top:557.5px;width:28.5px;height:29.0px;overflow:hidden;"><span class="t" style="left:0;width:28.500px;text-align:center;top:13.65px;font-size:13.2px;transform:scaleX(1.07);color:#1e6e42;">16</span></div>
<div style="left:1.5px;top:586.0px;width:28.5px;height:1px;background:#bdbdbd;"></div>
<div style="left:0.2px;top:586.5px;width:28.5px;height:29.0px;overflow:hidden;"><span class="t" style="left:0;width:28.500px;text-align:center;top:13.65px;font-size:13.2px;transform:scaleX(1.07);color:#1e6e42;">17</span></div>
<div style="left:1.5px;top:615.0px;width:28.5px;height:1px;background:#bdbdbd;"></div>
<div style="left:0.2px;top:615.5px;width:28.5px;height:29.0px;overflow:hidden;"><span class="t" style="left:0;width:28.500px;text-align:center;top:13.65px;font-size:13.2px;transform:scaleX(1.07);color:#1e6e42;">18</span></div>
<div style="left:1.5px;top:644.0px;width:28.5px;height:1px;background:#bdbdbd;"></div>
<div style="left:0.2px;top:644.5px;width:28.5px;height:29.0px;overflow:hidden;"><span class="t" style="left:0;width:28.500px;text-align:center;top:13.65px;font-size:13.2px;transform:scaleX(1.07);color:#1e6e42;">19</span></div>
<div style="left:1.5px;top:673.0px;width:28.5px;height:1px;background:#bdbdbd;"></div>
<div style="left:0.2px;top:673.5px;width:28.5px;height:29.0px;overflow:hidden;"><span class="t" style="left:0;width:28.500px;text-align:center;top:13.65px;font-size:13.2px;transform:scaleX(1.07);color:#1e6e42;">20</span></div>
<div style="left:1.5px;top:702.0px;width:28.5px;height:1px;background:#bdbdbd;"></div>
<div style="left:0.2px;top:702.5px;width:28.5px;height:29.0px;overflow:hidden;"><span class="t" style="left:0;width:28.500px;text-align:center;top:13.65px;font-size:13.2px;transform:scaleX(1.07);color:#1e6e42;">21</span></div>
<div style="left:1.5px;top:731.0px;width:28.5px;height:1px;background:#bdbdbd;"></div>
<div style="left:0.2px;top:731.5px;width:28.5px;height:29.0px;overflow:hidden;"><span class="t" style="left:0;width:28.500px;text-align:center;top:13.65px;font-size:13.2px;transform:scaleX(1.07);color:#1e6e42;">22</span></div>
<div style="left:1.5px;top:760.0px;width:28.5px;height:1px;background:#bdbdbd;"></div>
<div style="left:0.2px;top:760.5px;width:28.5px;height:29.0px;overflow:hidden;"><span class="t" style="left:0;width:28.500px;text-align:center;top:13.65px;font-size:13.2px;transform:scaleX(1.07);color:#1e6e42;">23</span></div>
<div style="left:1.5px;top:789.0px;width:28.5px;height:1px;background:#bdbdbd;"></div>
<div style="left:0.2px;top:789.5px;width:28.5px;height:20.0px;overflow:hidden;"><span class="t" style="left:0;width:28.500px;text-align:center;top:4.65px;font-size:13.2px;transform:scaleX(1.07);color:#262626;">24</span></div>
<div style="left:1.5px;top:809.0px;width:28.5px;height:1px;background:#c6c6c6;"></div>
<div style="left:0.2px;top:809.5px;width:28.5px;height:9.0px;overflow:hidden;"><span class="t" style="left:0;width:28.500px;text-align:center;top:-6.35px;font-size:13.2px;transform:scaleX(1.07);color:#262626;">25</span></div>
<div style="left:1.5px;top:818.0px;width:28.5px;height:1px;background:#c6c6c6;"></div>
<div style="left:0.2px;top:818.5px;width:28.5px;height:20.0px;overflow:hidden;"><span class="t" style="left:0;width:28.500px;text-align:center;top:4.65px;font-size:13.2px;transform:scaleX(1.07);color:#262626;">26</span></div>
<div style="left:1.5px;top:838.0px;width:28.5px;height:1px;background:#c6c6c6;"></div>
<div style="left:0.2px;top:838.5px;width:28.5px;height:20.0px;overflow:hidden;"><span class="t" style="left:0;width:28.500px;text-align:center;top:4.65px;font-size:13.2px;transform:scaleX(1.07);color:#262626;">27</span></div>
<div style="left:1.5px;top:858.0px;width:28.5px;height:1px;background:#c6c6c6;"></div>
<div style="left:0.2px;top:858.5px;width:28.5px;height:14.5px;overflow:hidden;"><span class="t" style="left:0;width:28.500px;text-align:center;top:5.65px;font-size:13.2px;transform:scaleX(1.07);color:#262626;">28</span></div>
<div style="left:29px;top:240px;width:1px;height:633px;background:#ababab;"></div>
<div style="left:28px;top:499px;width:2px;height:290.5px;background:#1e6e42;"></div>
<span id="t51" class="t" style="top:243.00px;font-size:14.5px;color:#1f3864;font-weight:bold;left:32px;transform-origin:0 0;transform:scaleX(0.8845);">Threshold</span>
<div style="left:101px;top:239px;width:210.5px;height:21px;background:#fbcb9a;border:1px solid #858585;"></div>
<span id="t52" class="t" style="top:243.90px;font-size:14.7px;color:#3f3f76;right:763.5px;transform-origin:100% 0;transform:scaleX(0.9637);">2000</span>
<div style="left:97px;top:234px;width:220px;height:31px;border:3px solid #e04640;box-shadow:inset 0 0 0 1px rgba(255,255,255,0.700);"></div>
<div style="left:30px;top:298.8px;width:615px;height:2px;background:#000;"></div>
<div style="left:643.5px;top:298.8px;width:2px;height:561px;background:#000;"></div>
<div style="left:30px;top:857.8px;width:615px;height:2px;background:#000;"></div>
<span id="t53" class="t" style="top:305.25px;font-size:21px;color:#1a1a1a;left:105.2px;transform-origin:0 0;transform:scaleX(0.8841);-webkit-text-stroke:0.250px #1a1a1a;">Profit and loss account for the year ended 31</span>
<div style="left:101px;top:439px;width:211px;height:20.5px;background:#d9d9d9;"></div>
<div style="left:491px;top:439px;width:82px;height:20.5px;background:#d9d9d9;"></div>
<div style="left:101px;top:789px;width:211px;height:20.5px;background:#d9d9d9;"></div>
<div style="left:491px;top:789px;width:82px;height:20.5px;background:#d9d9d9;"></div>
<div style="left:101px;top:818px;width:211px;height:20.5px;background:#d9d9d9;"></div>
<div style="left:491px;top:818px;width:82px;height:20.5px;background:#d9d9d9;"></div>
<span id="t54" class="t" style="top:391.90px;font-size:14.7px;color:#1a1a1a;left:103.8px;transform-origin:0 0;transform:scaleX(0.8844);-webkit-text-stroke:0.250px #1a1a1a;">Sales</span>
<span id="t55" class="t" style="top:411.90px;font-size:14.7px;color:#1a1a1a;left:103.8px;transform-origin:0 0;transform:scaleX(0.9128);-webkit-text-stroke:0.250px #1a1a1a;">Cost of sales</span>
<span id="t56" class="t" style="top:441.90px;font-size:14.7px;color:#1a1a1a;left:103.8px;transform-origin:0 0;transform:scaleX(0.9485);-webkit-text-stroke:0.250px #1a1a1a;">Gross profit</span>
<span id="t57" class="t" style="top:482.90px;font-size:14.7px;color:#1a1a1a;font-weight:bold;left:103.8px;transform-origin:0 0;transform:scaleX(0.8845);">Expenses:</span>
<span id="t58" class="t" style="top:511.90px;font-size:14.7px;color:#1a1a1a;left:103.8px;transform-origin:0 0;transform:scaleX(0.8874);-webkit-text-stroke:0.250px #1a1a1a;">Rent and rates</span>
<span id="t59" class="t" style="top:540.90px;font-size:14.7px;color:#1a1a1a;left:103.8px;transform-origin:0 0;transform:scaleX(0.9186);-webkit-text-stroke:0.250px #1a1a1a;">Professional fees</span>
<span id="t60" class="t" style="top:569.90px;font-size:14.7px;color:#1a1a1a;left:103.8px;transform-origin:0 0;transform:scaleX(0.9378);-webkit-text-stroke:0.250px #1a1a1a;">Insurance</span>
<span id="t61" class="t" style="top:598.90px;font-size:14.7px;color:#1a1a1a;left:103.8px;transform-origin:0 0;transform:scaleX(0.9173);-webkit-text-stroke:0.250px #1a1a1a;">Printing, postage and stationery</span>
<span id="t62" class="t" style="top:627.90px;font-size:14.7px;color:#1a1a1a;left:103.8px;transform-origin:0 0;transform:scaleX(0.9084);-webkit-text-stroke:0.250px #1a1a1a;">Advertising</span>
<span id="t63" class="t" style="top:656.90px;font-size:14.7px;color:#1a1a1a;left:103.8px;transform-origin:0 0;transform:scaleX(0.9415);-webkit-text-stroke:0.250px #1a1a1a;">Telephone and communications</span>
<span id="t64" class="t" style="top:685.90px;font-size:14.7px;color:#1a1a1a;left:103.8px;transform-origin:0 0;transform:scaleX(0.9233);-webkit-text-stroke:0.250px #1a1a1a;">Motor and travel</span>
<span id="t65" class="t" style="top:714.90px;font-size:14.7px;color:#1a1a1a;left:103.8px;transform-origin:0 0;transform:scaleX(0.9112);-webkit-text-stroke:0.250px #1a1a1a;">Bank charges and interest</span>
<span id="t66" class="t" style="top:743.90px;font-size:14.7px;color:#1a1a1a;left:103.8px;transform-origin:0 0;transform:scaleX(0.9017);-webkit-text-stroke:0.250px #1a1a1a;">General expenses</span>
<span id="t67" class="t" style="top:772.90px;font-size:14.7px;color:#1a1a1a;left:103.8px;transform-origin:0 0;transform:scaleX(0.9155);-webkit-text-stroke:0.250px #1a1a1a;">Depreciation</span>
<span id="t68" class="t" style="top:792.90px;font-size:14.7px;color:#1a1a1a;left:103.8px;transform-origin:0 0;transform:scaleX(0.9134);-webkit-text-stroke:0.250px #1a1a1a;">Total expenses</span>
<span id="t69" class="t" style="top:821.90px;font-size:14.7px;color:#1a1a1a;left:103.8px;transform-origin:0 0;transform:scaleX(0.9481);-webkit-text-stroke:0.250px #1a1a1a;">Net profit</span>
<span id="t70" class="t" style="top:411.90px;font-size:14.7px;color:#1a1a1a;right:507px;transform-origin:100% 0;transform:scaleX(0.9791);-webkit-text-stroke:0.250px #1a1a1a;">57,000</span>
<span id="t71" class="t" style="top:442.90px;font-size:14.7px;color:#000;font-weight:bold;right:507px;transform-origin:100% 0;transform:scaleX(0.9903);">68,000</span>
<span id="t72" class="t" style="top:792.90px;font-size:14.7px;color:#000;font-weight:bold;right:507px;transform-origin:100% 0;transform:scaleX(0.9903);">15,292</span>
<span id="t73" class="t" style="top:821.90px;font-size:14.7px;color:#000;font-weight:bold;right:507px;transform-origin:100% 0;transform:scaleX(0.9903);">52,708</span>
<div style="left:424.5px;top:499px;width:67.5px;height:290.5px;background:#c9c9c9;"></div>
<div style="left:424.5px;top:499px;width:67.5px;height:29px;background:#ffc7ce;"></div>
<div style="left:424.5px;top:673.5px;width:67.5px;height:29px;background:#cb969c;"></div>
<span id="t74" class="t" style="top:511.90px;font-size:14.7px;color:#9c0006;right:588.5px;transform-origin:100% 0;transform:scaleX(0.9792);-webkit-text-stroke:0.250px #9c0006;">7,260</span>
<span id="t75" class="t" style="top:540.90px;font-size:14.7px;color:#1a1a1a;right:588.5px;transform-origin:100% 0;-webkit-text-stroke:0.250px #1a1a1a;">800</span>
<span id="t76" class="t" style="top:569.90px;font-size:14.7px;color:#1a1a1a;right:588.5px;transform-origin:100% 0;transform:scaleX(0.9792);-webkit-text-stroke:0.250px #1a1a1a;">1,200</span>
<span id="t77" class="t" style="top:598.90px;font-size:14.7px;color:#1a1a1a;right:588.5px;transform-origin:100% 0;-webkit-text-stroke:0.250px #1a1a1a;">740</span>
<span id="t78" class="t" style="top:627.90px;font-size:14.7px;color:#1a1a1a;right:588.5px;transform-origin:100% 0;-webkit-text-stroke:0.250px #1a1a1a;">690</span>
<span id="t79" class="t" style="top:656.90px;font-size:14.7px;color:#1a1a1a;right:588.5px;transform-origin:100% 0;-webkit-text-stroke:0.250px #1a1a1a;">520</span>
<span id="t80" class="t" style="top:685.90px;font-size:14.7px;color:#8b1a22;right:588.5px;transform-origin:100% 0;transform:scaleX(0.9792);-webkit-text-stroke:0.250px #8b1a22;">2,100</span>
<span id="t81" class="t" style="top:714.90px;font-size:14.7px;color:#1a1a1a;right:588.5px;transform-origin:100% 0;-webkit-text-stroke:0.250px #1a1a1a;">652</span>
<span id="t82" class="t" style="top:743.90px;font-size:14.7px;color:#1a1a1a;right:588.5px;transform-origin:100% 0;-webkit-text-stroke:0.250px #1a1a1a;">230</span>
<span id="t83" class="t" style="top:772.90px;font-size:14.7px;color:#1a1a1a;right:588.5px;transform-origin:100% 0;transform:scaleX(0.9792);-webkit-text-stroke:0.250px #1a1a1a;">1,100</span>
<div style="left:423px;top:497.8px;width:70px;height:293px;border:2px solid #1e6e42;box-shadow:inset 0 0 0 1px #fff;"></div>
<div style="left:488px;top:786.3px;width:6.5px;height:6.5px;background:#1e6e42;border:1px solid #fff;"></div>
<div style="left:1049px;top:220px;width:22px;height:653px;background:#f3f3f3;"></div>
<svg style="left:1055.5px;top:224.5px;" width="10" height="8" viewBox="0 0 10 8"><path d="M0.500 7.300L5 0.600 9.500 7.300z" fill="#7a7a7a"/></svg>
<svg style="left:1055.5px;top:863.5px;" width="10" height="8" viewBox="0 0 10 8"><path d="M0.500 0.500L5 7.200 9.500 0.500z" fill="#7a7a7a"/></svg>
<div style="left:1056px;top:237px;width:9px;height:276px;background:#7a7a7a;border-radius:4.500px;"></div>
<div style="left:1.5px;top:873px;width:1070px;height:32.5px;background:#f3f3f3;"></div>
<svg style="left:29px;top:883px;" width="8" height="12" viewBox="0 0 8 12"><path d="M6.500 1L1.500 6l5 5" fill="none" stroke="#b4b4b4" stroke-width="1.400" stroke-linecap="round" stroke-linejoin="round"/></svg>
<svg style="left:61.5px;top:883px;" width="8" height="12" viewBox="0 0 8 12"><path d="M1.500 1L6.500 6l-5 5" fill="none" stroke="#b4b4b4" stroke-width="1.400" stroke-linecap="round" stroke-linejoin="round"/></svg>
<div style="left:117.5px;top:873px;width:131.5px;height:28px;background:linear-gradient(#f7fbf8,#dff0e4);border-radius:0 0 6px 6px;box-shadow:0 1px 2px rgba(0,0,0,0.18);"></div>
<span id="t84" class="t" style="top:880.00px;font-size:13.5px;color:#1c1c1c;font-weight:bold;left:125px;transform-origin:0 0;transform:scaleX(0.9544);">Financial accounts</span>
<div style="left:125.5px;top:895.8px;width:115px;height:2.3px;background:#107c41;border-radius:1px;"></div>
<div style="left:253.5px;top:877px;width:1px;height:22px;background:#d6d6d6;"></div>
<svg style="left:295px;top:882px;" width="13" height="13" viewBox="0 0 13 13"><path d="M6.500 0.500v12M0.500 6.500h12" stroke="#444" stroke-width="1.200"/></svg>
<div style="left:644.8px;top:885px;width:2px;height:2px;background:#444;border-radius:50%;"></div>
<div style="left:644.8px;top:889px;width:2px;height:2px;background:#444;border-radius:50%;"></div>
<div style="left:644.8px;top:893px;width:2px;height:2px;background:#444;border-radius:50%;"></div>
<svg style="left:667px;top:884px;" width="7" height="10" viewBox="0 0 7 10"><path d="M6.800 0.300V9.300L0.300 4.800z" fill="#767676"/></svg>
<svg style="left:1040.5px;top:884px;" width="7" height="10" viewBox="0 0 7 10"><path d="M0.300 0.300V9.300L6.800 4.800z" fill="#767676"/></svg>
<div style="left:678.8px;top:884.3px;width:204.5px;height:8.8px;background:#767676;border-radius:4.400px;"></div>
<div style="left:1.5px;top:905px;width:1070px;height:22.5px;background:#f3f3f3;border-top:1px solid #dcdcdc;"></div>
<span id="t85" class="t" style="top:911.25px;font-size:12px;color:#3a3a3a;left:8.8px;transform-origin:0 0;transform:scaleX(0.8937);">Ready</span>
<span id="t86" class="t" style="top:910.25px;font-size:12px;color:#3a3a3a;left:55.8px;transform-origin:0 0;transform:scaleX(0.9425);">Sheet 1 of 1</span>
<span id="t87" class="t" style="top:911.25px;font-size:12px;color:#3a3a3a;left:132px;transform-origin:0 0;transform:scaleX(0.9795);">Workbook Statistics</span>
<span id="t88" class="t" style="top:911.25px;font-size:12px;color:#3a3a3a;left:253.5px;transform-origin:0 0;transform:scaleX(0.9346);">Num Lock</span>
<svg style="left:320px;top:909px;" width="16" height="14" viewBox="0 0 16 14"><rect x="0.600" y="0.600" width="12.500" height="10" fill="#fff" stroke="#3a3a3a" stroke-width="1.100"/><path d="M0.600 3.500h12.500M3 6h6M3 8.200h4" stroke="#3a3a3a" stroke-width="1"/><circle cx="11" cy="9.300" r="3.400" fill="#f3f3f3" stroke="#3a3a3a" stroke-width="1.100"/><circle cx="11" cy="9.300" r="1.300" fill="#3a3a3a"/></svg>
<span id="t89" class="t" style="top:910.25px;font-size:12px;color:#3a3a3a;left:398.5px;transform-origin:0 0;transform:scaleX(0.9170);">Average:&nbsp; 1,529</span>
<span id="t90" class="t" style="top:910.25px;font-size:12px;color:#3a3a3a;left:491.5px;transform-origin:0 0;transform:scaleX(0.9799);">Count: 10</span>
<span id="t91" class="t" style="top:910.25px;font-size:12px;color:#3a3a3a;left:558px;transform-origin:0 0;transform:scaleX(0.9507);">Numerical Count: 10</span>
<span id="t92" class="t" style="top:910.25px;font-size:12px;color:#3a3a3a;left:678.3px;transform-origin:0 0;transform:scaleX(0.9035);">Sum:&nbsp; 15,292</span>
<div style="left:760px;top:906px;width:39.5px;height:20px;background:#e0e0e0;"></div>
<svg style="left:773px;top:909px;" width="14" height="14" viewBox="0 0 14 14"><rect x="0.600" y="0.600" width="12.600" height="12.300" fill="none" stroke="#3a3a3a" stroke-width="1.100"/><path d="M4.800 0.600v12.300M9 0.600v12.300M0.600 4.700h12.600M0.600 8.800h12.600" stroke="#3a3a3a" stroke-width="1.100"/></svg>
<svg style="left:813px;top:909px;" width="15" height="14" viewBox="0 0 15 14"><rect x="0.600" y="0.600" width="13" height="12.300" fill="none" stroke="#3a3a3a" stroke-width="1.100"/><rect x="3.600" y="3.400" width="7" height="6.800" fill="none" stroke="#3a3a3a" stroke-width="1"/><path d="M5.200 5.600h3.800M5.200 7.800h3.800" stroke="#3a3a3a" stroke-width="0.900"/></svg>
<svg style="left:853px;top:909px;" width="15" height="14" viewBox="0 0 15 14"><rect x="0.600" y="0.600" width="13" height="12.300" fill="none" stroke="#3a3a3a" stroke-width="1.100"/><path d="M4 0.600v6.500h6V0.600" fill="none" stroke="#3a3a3a" stroke-width="1.100"/></svg>
<div style="left:886px;top:915px;width:8px;height:1.2px;background:#3a3a3a;"></div>
<div style="left:900px;top:915.2px;width:99px;height:1px;background:#6a6a6a;"></div>
<div style="left:947.5px;top:909.5px;width:4.5px;height:12.5px;background:#5a5a5a;"></div>
<svg style="left:1003px;top:910.5px;" width="10" height="10" viewBox="0 0 10 10"><path d="M5 0.500v9M0.500 5h9" stroke="#3a3a3a" stroke-width="1.100"/></svg>
<span id="t93" class="t" style="top:910.25px;font-size:12px;color:#3a3a3a;left:1025.3px;transform-origin:0 0;transform:scaleX(0.8794);">100%</span>
<div style="left:479px;top:109.5px;width:186.5px;height:301px;background:#fff;border:1px solid #5c5c5c;border-radius:0 5px 5px 5px;box-shadow:0 7px 9px -3px rgba(0,0,0,0.200), 1px 1px 3px rgba(0,0,0,0.060);"></div>
<div style="left:481px;top:111.5px;width:183px;height:39.5px;background:#f0f0f0;"></div>
<svg style="left:495px;top:119px;" width="32" height="30" viewBox="0 0 32 30"><g transform="translate(0,0)"><rect x="0.500" y="0.500" width="27" height="21" fill="#fff"/><rect x="8" y="8" width="12.500" height="6" fill="#fbd08b"/><path d="M8 8h12.500" stroke="#f28c1e" stroke-width="1.600"/><path d="M8.200 8v6" stroke="#f28c1e" stroke-width="1"/><path d="M0.500 0.500h27v21H0.500zM7.500 0.500v21M20.500 0.500v21M0.500 7.500h27M0.500 14.500h27" fill="none" stroke="#3a3a3a" stroke-width="1"/></g><rect x="12.5" y="13.5" width="17" height="13" fill="#fff" stroke="#3a3a3a" stroke-width="1"/><text x="21" y="23.600" font-family="Liberation Sans" font-size="11.500" text-anchor="middle" fill="#3a3a3a">≤</text></svg>
<span id="t94" class="t" style="top:126.00px;font-size:13.5px;color:#1f1f1f;font-weight:bold;left:529.5px;transform-origin:0 0;transform:scaleX(0.8406);"><u>H</u>ighlight Cells Rules</span>
<svg style="left:650.5px;top:123.5px;" width="8" height="11" viewBox="0 0 8 11"><path d="M1.200 1L6.300 5.500 1.200 10" fill="none" stroke="#444" stroke-width="1.300" stroke-linecap="round" stroke-linejoin="round"/></svg>
<svg style="left:495px;top:161px;" width="32" height="30" viewBox="0 0 32 30"><g transform="translate(0,0)"><rect x="0.500" y="0.500" width="27" height="21" fill="#fff"/><rect x="8" y="1" width="12.500" height="20" fill="#fbd08b"/><path d="M8.200 1v20" stroke="#f28c1e" stroke-width="1.200"/><path d="M0.500 0.500h27v21H0.500zM7.500 0.500v21M20.500 0.500v21M0.500 7.500h27M0.500 14.500h27" fill="none" stroke="#3a3a3a" stroke-width="1"/></g><path d="M14.300 12.500V2.500M10.500 6l3.800-3.800L18 6" fill="none" stroke="#3a3a3a" stroke-width="1.200"/><rect x="12.5" y="13.5" width="17" height="13" fill="#fff" stroke="#3a3a3a" stroke-width="1"/><text x="21" y="23.500" font-family="Liberation Sans" font-size="10" text-anchor="middle" fill="#3a3a3a">10</text></svg>
<span id="t95" class="t" style="top:168.00px;font-size:13.5px;color:#1f1f1f;font-weight:bold;left:529.5px;transform-origin:0 0;transform:scaleX(0.8937);"><u>T</u>op/Bottom Rules</span>
<svg style="left:650.5px;top:165.5px;" width="8" height="11" viewBox="0 0 8 11"><path d="M1.200 1L6.300 5.500 1.200 10" fill="none" stroke="#444" stroke-width="1.300" stroke-linecap="round" stroke-linejoin="round"/></svg>
<div style="left:526px;top:194px;width:138.5px;height:1px;background:#dcdcdc;"></div>
<svg style="left:495px;top:206px;" width="29" height="23" viewBox="0 0 29 23"><rect x="0.500" y="0.500" width="27" height="21" fill="#fff"/><path d="M0.500 0.500h27v21H0.500zM5.500 0.500v21M22.500 0.500v21M0.500 7.500h27M0.500 14.500h27" fill="none" stroke="#3a3a3a" stroke-width="1"/><path d="M5.500 0.500H13.500V7.500H8V14.500H12V21.500H5.500z" fill="#8fc1ee" stroke="#2f86d9" stroke-width="1" stroke-linejoin="miter"/><path d="M5.500 0.500v21" stroke="#2f86d9" stroke-width="1.600"/></svg>
<span id="t96" class="t" style="top:213.00px;font-size:13.5px;color:#1f1f1f;font-weight:bold;left:529.5px;transform-origin:0 0;transform:scaleX(0.8565);"><u>D</u>ata Bars</span>
<svg style="left:650.5px;top:210.5px;" width="8" height="11" viewBox="0 0 8 11"><path d="M1.200 1L6.300 5.500 1.200 10" fill="none" stroke="#444" stroke-width="1.300" stroke-linecap="round" stroke-linejoin="round"/></svg>
<svg style="left:495px;top:248px;" width="29" height="23" viewBox="0 0 29 23"><rect x="0.500" y="0.500" width="27" height="21" fill="#fff"/><rect x="5.500" y="0.500" width="17" height="7" fill="#7db5ea"/><rect x="5.500" y="7.500" width="17" height="7" fill="#fbd785"/><rect x="5.500" y="14.500" width="17" height="7" fill="#f9868c"/><path d="M5.500 7.500h17" stroke="#2f86d9" stroke-width="1"/><path d="M5.500 14.500h17" stroke="#e8474c" stroke-width="1"/><path d="M0.500 0.500h27v21H0.500zM5.500 0.500v21M22.500 0.500v21M0.500 7.500h5M22.500 7.500h5M0.500 14.500h5M22.500 14.500h5" fill="none" stroke="#3a3a3a" stroke-width="1"/></svg>
<span id="t97" class="t" style="top:255.00px;font-size:13.5px;color:#1f1f1f;font-weight:bold;left:529.5px;transform-origin:0 0;transform:scaleX(0.8128);">Color <u>S</u>cales</span>
<svg style="left:650.5px;top:252.5px;" width="8" height="11" viewBox="0 0 8 11"><path d="M1.200 1L6.300 5.500 1.200 10" fill="none" stroke="#444" stroke-width="1.300" stroke-linecap="round" stroke-linejoin="round"/></svg>
<svg style="left:495px;top:290px;" width="29" height="23" viewBox="0 0 29 23"><rect x="0.500" y="0.500" width="27" height="21" fill="#fff"/><circle cx="9" cy="4" r="1.500" fill="#2e86de"/><path d="M16 4h4.500" stroke="#3a3a3a" stroke-width="1"/><circle cx="9" cy="11" r="1.500" fill="#e8474c"/><path d="M16 11h4.500" stroke="#3a3a3a" stroke-width="1"/><circle cx="9" cy="18" r="1.500" fill="#2e86de"/><path d="M16 18h4.500" stroke="#3a3a3a" stroke-width="1"/><path d="M0.500 0.500h27v21H0.500zM5.500 0.500v21M22.500 0.500v21M0.500 7.500h27M0.500 14.500h27" fill="none" stroke="#3a3a3a" stroke-width="1"/></svg>
<span id="t98" class="t" style="top:297.00px;font-size:13.5px;color:#1f1f1f;font-weight:bold;left:529.5px;transform-origin:0 0;transform:scaleX(0.8660);"><u>I</u>con Sets</span>
<svg style="left:650.5px;top:294.5px;" width="8" height="11" viewBox="0 0 8 11"><path d="M1.200 1L6.300 5.500 1.200 10" fill="none" stroke="#444" stroke-width="1.300" stroke-linecap="round" stroke-linejoin="round"/></svg>
<div style="left:481px;top:323.5px;width:183.5px;height:1px;background:#dcdcdc;"></div>
<svg style="left:493px;top:331px;" width="16" height="15" viewBox="0 0 16 15"><rect x="0.500" y="0.500" width="15" height="13.500" fill="#fff"/><rect x="5.500" y="5" width="5.500" height="4.500" fill="#fbd08b"/><path d="M5.500 5h5.500" stroke="#f28c1e" stroke-width="1.300"/><path d="M0.500 0.500h15v13.500H0.500zM5.500 0.500v13.500M10.500 0.500v13.500M0.500 5h15M0.500 9.500h15" fill="none" stroke="#3a3a3a" stroke-width="1"/></svg>
<span id="t99" class="t" style="top:332.25px;font-size:13px;color:#1f1f1f;left:517.5px;transform-origin:0 0;transform:scaleX(0.8854);"><u>N</u>ew Rule...</span>
<svg style="left:493px;top:359px;" width="18" height="16" viewBox="0 0 18 16"><rect x="0.500" y="0.500" width="15" height="13.500" fill="#fff"/><rect x="5.500" y="5" width="5.500" height="4.500" fill="#fbd08b"/><path d="M5.500 5h5.500" stroke="#f28c1e" stroke-width="1.300"/><path d="M0.500 0.500h15v13.500H0.500zM5.500 0.500v13.500M10.500 0.500v13.500M0.500 5h15M0.500 9.500h15" fill="none" stroke="#3a3a3a" stroke-width="1"/><rect x="9" y="8" width="9" height="8" fill="#fff"/><g transform="rotate(-40 13 11.500)"><rect x="8.500" y="9.300" width="9" height="4.600" rx="1" fill="#e9d0f4" stroke="#9b3fc0" stroke-width="1.100"/><path d="M11.500 9.300v4.600" stroke="#9b3fc0" stroke-width="1"/></g></svg>
<span id="t100" class="t" style="top:360.25px;font-size:13px;color:#1f1f1f;left:517.5px;transform-origin:0 0;transform:scaleX(0.8686);"><u>C</u>lear Rules</span>
<svg style="left:650.5px;top:360.5px;" width="8" height="11" viewBox="0 0 8 11"><path d="M1.200 1L6.300 5.500 1.200 10" fill="none" stroke="#444" stroke-width="1.300" stroke-linecap="round" stroke-linejoin="round"/></svg>
<svg style="left:491.5px;top:385px;" width="18" height="17" viewBox="0 0 18 17"><path d="M0.500 14V0.500H14" fill="none" stroke="#3a3a3a" stroke-width="1"/><g transform="translate(2,2)"><rect x="0.500" y="0.500" width="15" height="13.500" fill="#fff"/><rect x="5.500" y="5" width="5.500" height="4.500" fill="#fbd08b"/><path d="M5.500 5h5.500" stroke="#f28c1e" stroke-width="1.300"/><path d="M0.500 0.500h15v13.500H0.500zM5.500 0.500v13.500M10.500 0.500v13.500M0.500 5h15M0.500 9.500h15" fill="none" stroke="#3a3a3a" stroke-width="1"/></g></svg>
<span id="t101" class="t" style="top:388.25px;font-size:13px;color:#1f1f1f;left:517.5px;transform-origin:0 0;transform:scaleX(0.8873);">Manage <u>R</u>ules...</span>
<div style="left:665.5px;top:109.5px;width:186px;height:328px;background:#fff;border:1px solid #5c5c5c;border-radius:5px;box-shadow:0 7px 9px -3px rgba(0,0,0,0.200), 1px 1px 3px rgba(0,0,0,0.060);"></div>
<div style="left:666.5px;top:110.5px;width:184px;height:42px;background:#f5f5f5;border-radius:4px 4px 0 0;"></div>
<svg style="left:681px;top:121px;" width="32" height="30" viewBox="0 0 32 30"><g transform="translate(0,0)"><rect x="0.500" y="0.500" width="27" height="21" fill="#fff"/><rect x="8" y="8" width="12.500" height="6" fill="#fbd08b"/><path d="M8 8h12.500" stroke="#f28c1e" stroke-width="1.600"/><path d="M8.200 8v6" stroke="#f28c1e" stroke-width="1"/><path d="M0.500 0.500h27v21H0.500zM7.500 0.500v21M20.500 0.500v21M0.500 7.500h27M0.500 14.500h27" fill="none" stroke="#3a3a3a" stroke-width="1"/></g><rect x="12.5" y="13.5" width="17" height="13" fill="#fff" stroke="#3a3a3a" stroke-width="1"/><text x="21" y="24.0" font-family="Liberation Sans" font-size="13" text-anchor="middle" fill="#3a3a3a">&gt;</text></svg>
<span id="t102" class="t" style="top:125.00px;font-size:13.5px;color:#1f1f1f;font-weight:bold;left:716px;transform-origin:0 0;transform:scaleX(0.8762);"><u>G</u>reater Than...</span>
<svg style="left:681px;top:163px;" width="32" height="30" viewBox="0 0 32 30"><g transform="translate(0,0)"><rect x="0.500" y="0.500" width="27" height="21" fill="#fff"/><rect x="8" y="8" width="12.500" height="6" fill="#fbd08b"/><path d="M8 8h12.500" stroke="#f28c1e" stroke-width="1.600"/><path d="M8.200 8v6" stroke="#f28c1e" stroke-width="1"/><path d="M0.500 0.500h27v21H0.500zM7.500 0.500v21M20.500 0.500v21M0.500 7.500h27M0.500 14.500h27" fill="none" stroke="#3a3a3a" stroke-width="1"/></g><rect x="12.5" y="13.5" width="17" height="13" fill="#fff" stroke="#3a3a3a" stroke-width="1"/><text x="21" y="24.0" font-family="Liberation Sans" font-size="13" text-anchor="middle" fill="#3a3a3a">&lt;</text></svg>
<span id="t103" class="t" style="top:167.00px;font-size:13.5px;color:#1f1f1f;font-weight:bold;left:716px;transform-origin:0 0;transform:scaleX(0.8010);"><u>L</u>ess Than...</span>
<svg style="left:681px;top:205px;" width="32" height="30" viewBox="0 0 32 30"><g transform="translate(0,0)"><rect x="0.500" y="0.500" width="27" height="21" fill="#fff"/><rect x="1" y="1" width="6.500" height="6.500" fill="#5ea6e4"/><rect x="21" y="1" width="6.500" height="6.500" fill="#5ea6e4"/><rect x="8" y="8" width="12.500" height="6" fill="#fbd08b"/><path d="M0.500 0.500h27v21H0.500zM7.500 0.500v21M20.500 0.500v21M0.500 7.500h27M0.500 14.500h27" fill="none" stroke="#3a3a3a" stroke-width="1"/></g></svg>
<span id="t104" class="t" style="top:209.00px;font-size:13.5px;color:#1f1f1f;font-weight:bold;left:716px;transform-origin:0 0;transform:scaleX(0.8985);"><u>B</u>etween...</span>
<svg style="left:681px;top:247px;" width="32" height="30" viewBox="0 0 32 30"><g transform="translate(0,0)"><rect x="0.500" y="0.500" width="27" height="21" fill="#fff"/><rect x="8" y="8" width="12.500" height="6" fill="#fbd08b"/><path d="M8 8h12.500" stroke="#f28c1e" stroke-width="1.600"/><path d="M8.200 8v6" stroke="#f28c1e" stroke-width="1"/><path d="M0.500 0.500h27v21H0.500zM7.500 0.500v21M20.500 0.500v21M0.500 7.500h27M0.500 14.500h27" fill="none" stroke="#3a3a3a" stroke-width="1"/></g><rect x="12.5" y="13.5" width="17" height="13" fill="#fff" stroke="#3a3a3a" stroke-width="1"/><text x="21" y="23.9" font-family="Liberation Sans" font-size="13" text-anchor="middle" fill="#3a3a3a">=</text></svg>
<span id="t105" class="t" style="top:251.00px;font-size:13.5px;color:#1f1f1f;font-weight:bold;left:716px;transform-origin:0 0;transform:scaleX(0.8251);"><u>E</u>qual To...</span>
<svg style="left:681px;top:289px;" width="32" height="30" viewBox="0 0 32 30"><g transform="translate(0,0)"><rect x="0.500" y="0.500" width="27" height="21" fill="#fff"/><rect x="8" y="8" width="12.500" height="6" fill="#fbd08b"/><path d="M8 8h12.500" stroke="#f28c1e" stroke-width="1.600"/><path d="M8.200 8v6" stroke="#f28c1e" stroke-width="1"/><path d="M0.500 0.500h27v21H0.500zM7.500 0.500v21M20.500 0.500v21M0.500 7.500h27M0.500 14.500h27" fill="none" stroke="#3a3a3a" stroke-width="1"/></g><rect x="12.5" y="13.5" width="17" height="13" fill="#fff" stroke="#3a3a3a" stroke-width="1"/><text x="21" y="23.4" font-family="Liberation Sans" font-size="12" text-anchor="middle" fill="#3a3a3a">a</text></svg>
<span id="t106" class="t" style="top:293.00px;font-size:13.5px;color:#1f1f1f;font-weight:bold;left:716px;transform-origin:0 0;transform:scaleX(0.8710);"><u>T</u>ext that Contains...</span>
<svg style="left:681px;top:331px;" width="32" height="30" viewBox="0 0 32 30"><g transform="translate(0,0)"><rect x="0.500" y="0.500" width="27" height="21" fill="#fff"/><rect x="8" y="8" width="12.500" height="6" fill="#fbd08b"/><path d="M8 8h12.500" stroke="#f28c1e" stroke-width="1.600"/><path d="M8.200 8v6" stroke="#f28c1e" stroke-width="1"/><path d="M0.500 0.500h27v21H0.500zM7.500 0.500v21M20.500 0.500v21M0.500 7.500h27M0.500 14.500h27" fill="none" stroke="#3a3a3a" stroke-width="1"/></g><rect x="15.5" y="12.5" width="15" height="14" fill="#fff" stroke="#3a3a3a" stroke-width="1"/><path d="M15.500 16h15M19 10.500v3.500M27 10.500v3.500" stroke="#3a3a3a" stroke-width="1" fill="none"/></svg>
<span id="t107" class="t" style="top:335.00px;font-size:13.5px;color:#1f1f1f;font-weight:bold;left:716px;transform-origin:0 0;transform:scaleX(0.8663);"><u>A</u> Date Occurring...</span>
<svg style="left:681px;top:373px;" width="32" height="30" viewBox="0 0 32 30"><g transform="translate(0,0)"><rect x="0.500" y="0.500" width="27" height="21" fill="#fff"/><rect x="8" y="1" width="12.500" height="6.500" fill="#fbd08b"/><rect x="8" y="14.500" width="12.500" height="6.500" fill="#fbd08b"/><path d="M8 1.200h12.500M8 14.700h12.500" stroke="#f28c1e" stroke-width="1.400"/><path d="M0.500 0.500h27v21H0.500zM7.500 0.500v21M20.500 0.500v21M0.500 7.500h27M0.500 14.500h27" fill="none" stroke="#3a3a3a" stroke-width="1"/></g></svg>
<span id="t108" class="t" style="top:377.00px;font-size:13.5px;color:#1f1f1f;font-weight:bold;left:716px;transform-origin:0 0;transform:scaleX(0.8561);"><u>D</u>uplicate Values...</span>
<div style="left:667px;top:405.7px;width:183.5px;height:1px;background:#dcdcdc;"></div>
<span id="t109" class="t" style="top:415.25px;font-size:13px;color:#1f1f1f;left:704.2px;transform-origin:0 0;transform:scaleX(0.8858);"><u>M</u>ore Rules...</span>
<div style="left:530px;top:465px;width:481px;height:135.5px;background:#fff;border:3px solid #e04640;"></div>
<div style="left:534px;top:468.5px;width:471.5px;height:129px;background:#f0f0f0;border-radius:7px;box-shadow:0 0 0 0.800px #b5b5b5;overflow:hidden;"><div style="left:0;top:0;width:100%;height:29px;background:#fff;"></div></div>
<span id="t110" class="t" style="top:476.25px;font-size:12px;color:#1b1b1b;left:542.8px;transform-origin:0 0;transform:scaleX(0.9486);">Greater Than</span>
<span id="t111" class="t" style="top:475.25px;font-size:13px;color:#1b1b1b;left:934.5px;transform-origin:0 0;transform:scaleX(0.8985);">?</span>
<svg style="left:976px;top:475.5px;" width="12" height="12" viewBox="0 0 12 12"><path d="M1 1l10 10M11 1L1 11" stroke="#1b1b1b" stroke-width="1.200"/></svg>
<span id="t112" class="t" style="top:505.00px;font-size:12.5px;color:#1b1b1b;font-weight:bold;left:542.3px;transform-origin:0 0;transform:scaleX(0.8476);">Format cells that are GREATER THAN:</span>
<div style="left:543px;top:532px;width:215px;height:21.5px;background:#fff;"></div>
<div style="left:736.5px;top:533.5px;width:20.5px;height:18px;background:#fdfdfd;border:1px solid #d0d0d0;border-radius:3px;box-shadow:0 1px 0 #bdbdbd;"></div>
<svg style="left:741.5px;top:536.5px;" width="11" height="12" viewBox="0 0 11 12"><path d="M5.500 9V2.200M2 5.200l3.500-3.700L9 5.200z" fill="#1b1b1b" stroke="#1b1b1b" stroke-width="1.300" stroke-linejoin="round"/><path d="M1 10.800h9" stroke="#1b1b1b" stroke-width="1.600"/></svg>
<span id="t113" class="t" style="top:537.00px;font-size:12.5px;color:#1b1b1b;left:545.8px;transform-origin:0 0;transform:scaleX(0.8356);">=$B$1</span>
<div style="left:577.5px;top:536.5px;width:1px;height:14px;background:#000;"></div>
<div style="left:540px;top:528.8px;width:221px;height:27.2px;border:3px solid #e04640;"></div>
<span id="t114" class="t" style="top:536.00px;font-size:12.5px;color:#1b1b1b;left:767.7px;transform-origin:0 0;transform:scaleX(1.0569);">with</span>
<div style="left:801px;top:532.5px;width:198px;height:20.5px;background:#fff;border:1px solid #b4b4b4;"></div>
<span id="t115" class="t" style="top:536.00px;font-size:12.5px;color:#1b1b1b;left:805.2px;transform-origin:0 0;transform:scaleX(0.9249);">Light Red Fill with Dark Red Text</span>
<div style="left:980.5px;top:534.5px;width:16px;height:16.5px;background:#fdfdfd;border:1px solid #c9c9c9;border-radius:3px;"></div>
<svg style="left:983.5px;top:540px;" width="10" height="7" viewBox="0 0 10 7"><path d="M1 1l4 4 4-4" fill="none" stroke="#555" stroke-width="1.100" stroke-linecap="round" stroke-linejoin="round"/></svg>
<div style="left:841px;top:569px;width:73px;height:21px;background:#fdfdfd;border:1.300px solid #0a66c2;border-radius:4px;"></div>
<span id="t116" class="t" style="top:574.00px;font-size:12.5px;color:#1b1b1b;left:877.5px;transform-origin:50% 0;transform:translateX(-50%) ;">OK</span>
<div style="left:925.5px;top:569px;width:72.5px;height:21px;background:#fdfdfd;border:1px solid #d0d0d0;border-radius:4px;box-shadow:0 1px 0 #bcbcbc;"></div>
<span id="t117" class="t" style="top:574.00px;font-size:12.5px;color:#1b1b1b;left:943.5px;transform-origin:0 0;transform:scaleX(0.9378);">Cancel</span>
<div style="left:1001px;top:593.5px;width:1.5px;height:1.5px;background:#b0b0b0;"></div>
<div style="left:998px;top:593.5px;width:1.5px;height:1.5px;background:#b0b0b0;"></div>
<div style="left:1001px;top:590.5px;width:1.5px;height:1.5px;background:#b0b0b0;"></div>
<div style="left:995px;top:593.5px;width:1.5px;height:1.5px;background:#b0b0b0;"></div>
<div style="left:1001px;top:587.5px;width:1.5px;height:1.5px;background:#b0b0b0;"></div>
<div style="left:998px;top:590.5px;width:1.5px;height:1.5px;background:#b0b0b0;"></div>
<div style="left:0px;top:0px;width:1072px;height:928px;border:1.300px solid #107c41;border-radius:6px 8px 6px 6px;pointer-events:none;"></div>
<div style="left:1.2px;top:48.5px;width:1069.6px;height:878.3px;border:1px solid rgba(235,250,242,0.900);border-top:none;border-radius:0 0 6px 6px;pointer-events:none;"></div>
</body></html>
